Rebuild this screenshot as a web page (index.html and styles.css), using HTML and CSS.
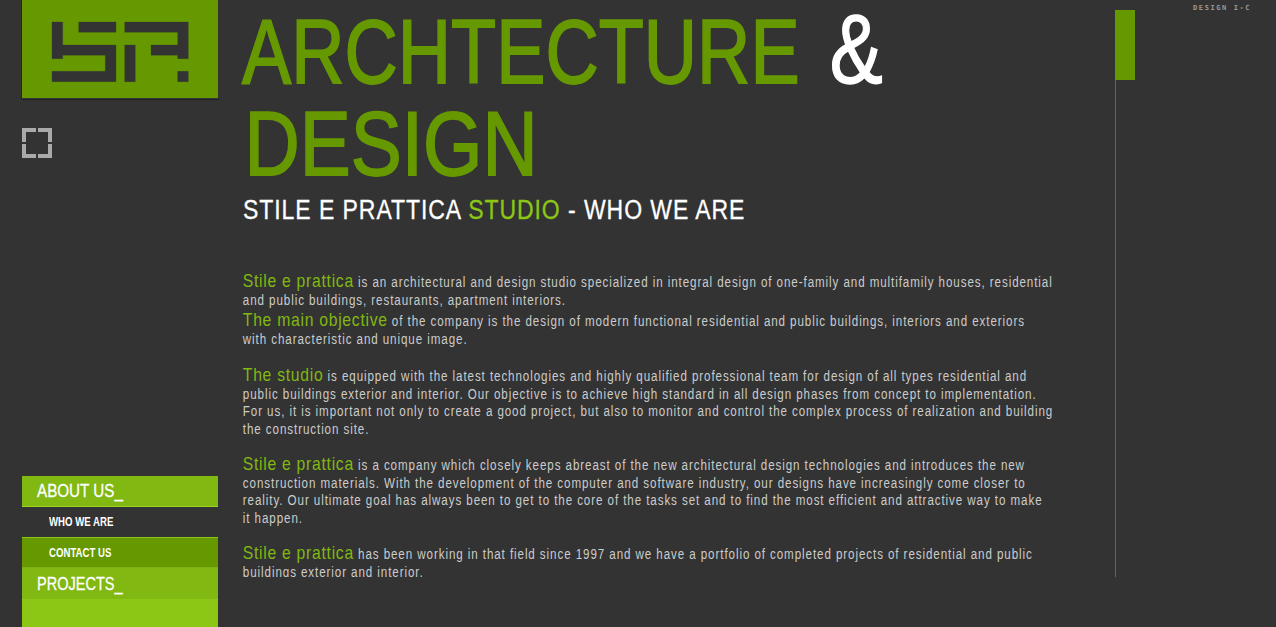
FILE: index.html
```html
<!DOCTYPE html>
<html lang="en">
<head>
<meta charset="utf-8">
<title>Stile e Prattica Studio - Who we are</title>
<link rel="stylesheet" href="styles.css">
</head>
<body>
<div class="page">
  <aside class="side">
    <a class="logo" href="#" aria-label="Stile e Prattica">
      <svg width="196" height="98" viewBox="22 0 196 98">
        <rect x="22" y="0" width="196" height="98" fill="#669900"/>
        <path class="cut" d="M52 22h10.700v23H116v36.700H52V71.300h53.300V55.300H62.700v3.400H52zM78.700 22H116v10.300H78.700zM124.700 22h63.600v36.700h-10.600v-3.400H151V45h26.700V32.300h-53zM124.700 45h10.600v36.700h-10.600zM177.700 71.300h10.600v10.400h-10.600z"/>
      </svg>
    </a>
    <svg class="corners" width="30" height="30" viewBox="0 0 30 30">
      <path d="M0 0h14v4H4v10H0zM16 0h14v14h-4V4H16zM0 16h4v10h10v4H0zM26 16h4v14H16v-4h10z"/>
    </svg>
    <nav class="menu">
      <a class="menu-main menu-about" href="#"><span class="sq">ABOUT US_</span></a>
      <a class="menu-sub" href="#"><span class="sq">WHO WE ARE</span></a>
      <a class="menu-sub menu-contact" href="#"><span class="sq">CONTACT US</span></a>
      <a class="menu-main menu-projects" href="#"><span class="sq">PROJECTS_</span></a>
      <div class="menu-fill"></div>
    </nav>
  </aside>
  <main class="main">
    <h1 class="headline"><span class="h-line">ARCHTECTURE <em>&amp;</em></span><span class="h-line h-two">DESIGN</span></h1>
    <h2 class="subhead"><span class="sq">STILE E PRATTICA <em>STUDIO</em> - WHO WE ARE</span></h2>
    <div class="copy">
      <p class="para para-tight"><b>Stile e prattica</b> is an architectural and design studio specialized in integral design of one-family and multifamily houses, residential<br>and public buildings, restaurants, apartment interiors.</p>
      <p class="para para-wide"><b>The main objective</b> of the company is the design of modern functional residential and public buildings, interiors and exteriors<br>with characteristic and unique image.</p>
      <p class="para"><b>The studio</b> is equipped with the latest technologies and highly qualified professional team for design of all types residential and<br>public buildings exterior and interior. Our objective is to achieve high standard in all design phases from concept to implementation.<br>For us, it is important not only to create a good project, but also to monitor and control the complex process of realization and building<br>the construction site.</p>
      <p class="para"><b>Stile e prattica</b> is a company which closely keeps abreast of the new architectural design technologies and introduces the new<br>construction materials. With the development of the computer and software industry, our designs have increasingly come closer to<br>reality. Our ultimate goal has always been to get to the core of the tasks set and to find the most efficient and attractive way to make<br>it happen.</p>
      <p class="para"><b>Stile e prattica</b> has been working in that field since 1997 and we have a portfolio of completed projects of residential and public<br>buildings exterior and interior.</p>
    </div>
  </main>
  <div class="rail">
    <div class="rail-thumb"></div>
  </div>
  <div class="version">DESIGN I-C</div>
</div>
</body>
</html>
```
FILE: styles.css
```css
* { box-sizing: border-box; }
html, body { margin: 0; height: 100%; background: #333333; overflow: hidden; }
body { font-family: "Liberation Sans", Arial, sans-serif; }
.page {
  display: grid;
  grid-template-columns: 242px 873px 20px 141px;
  height: 627px;
}
.side { display: flex; flex-direction: column; padding-left: 22px; width: 218px; height: 627px; }
.logo { display: block; width: 196px; height: 99px; box-shadow: 0 1px 1px #222, -1px 0 0 #2a2a2a; }
.logo svg { display: block; }
.cut { fill: #333333; stroke: #4f7410; stroke-width: .6; paint-order: stroke; }
.corners { display: block; margin-top: 29px; fill: #aaaaaa; }
.menu { margin-top: auto; display: flex; flex-direction: column; }
.menu a { display: block; color: #ffffff; text-decoration: none; white-space: nowrap; overflow: hidden; }
.sq { display: inline-block; transform-origin: left center; }
.menu-main { height: 31px; background: #81b811; font-size: 19px; line-height: 30px; padding-left: 15px; -webkit-text-stroke: .3px #ffffff; }
.menu-main .sq { transform: scaleX(.8); }
.menu-projects { line-height: 32px; }
.menu-main.menu-projects .sq { transform: scaleX(.765); }
.menu-about { border-bottom: 1px solid #99d422; }
.menu-sub { height: 30px; font-size: 13px; font-weight: bold; line-height: 30px; padding-left: 27px; }
.menu-sub .sq { transform: scaleX(.74); }
.menu-contact { height: 31px; background: #669900; border-top: 1px solid #8cc81e; border-bottom: 1px solid #7cb313; }
.menu-fill { height: 28px; background: #8bc714; }
.main { overflow-x: visible; overflow-y: clip; height: 577px; min-width: 0; }
.headline { margin: 0; font-size: 91px; font-weight: normal; line-height: 92px; color: #669900; white-space: nowrap; padding-top: 6px; word-spacing: 12px; -webkit-text-stroke: 1.8px #669900; }
.h-line { display: block; transform: scaleX(.811); transform-origin: left top; height: 92px; }
.h-two { padding-left: 3px; transform: scaleX(.84); }
.headline em { font-style: normal; font-size: 98px; line-height: 0; color: #ffffff; -webkit-text-stroke: 1.4px #ffffff; }
.subhead { margin: 0; font-size: 27px; font-weight: normal; line-height: 30px; color: #ffffff; white-space: nowrap; padding-left: 1px; margin-top: 5px; -webkit-text-stroke: .3px #ffffff; }
.subhead .sq { transform: scaleX(.852); letter-spacing: 1.1px; }
.subhead em { font-style: normal; color: #8bc714; -webkit-text-stroke: .3px #8bc714; }
.copy {
  width: 1100px;
  margin-top: 49px;
  transform: scaleX(.829);
  transform-origin: left top;
  font-size: 14px;
  line-height: 17.500px;
  letter-spacing: 1.1px;
  color: #cccccc;
  white-space: nowrap;
  padding-left: 1px;
}
.para { margin: 0 0 19px; }
.para-tight { margin-bottom: 4px; }
.para-wide { margin-bottom: 20px; }
.para b { font-weight: normal; font-size: 19px; line-height: 0; color: #81b811; letter-spacing: .85px; }
.rail { margin-top: 10px; height: 567px; border-left: 1px solid #666666; }
.rail-thumb { width: 20px; height: 70px; margin-left: -1px; background: #669900; }
.version { padding: 4px 0 0 58px; font-family: "DejaVu Sans Mono", monospace; font-size: 7px; font-weight: bold; line-height: 9px; letter-spacing: 1.6px; color: #999999; white-space: nowrap; }
```
